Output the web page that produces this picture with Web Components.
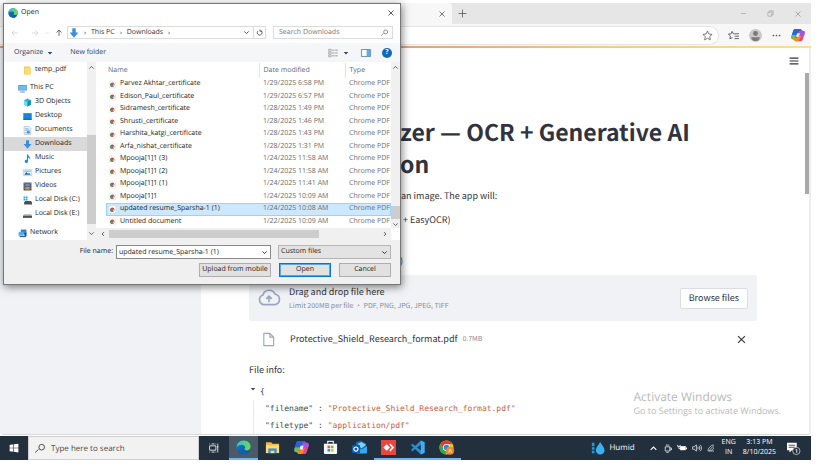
<!DOCTYPE html>
<html lang="en">
<head>
<meta charset="utf-8">
<title>Open</title>
<style>
body{margin:0;background:#fff;font-family:"Open Sans","Noto Sans",sans-serif;font-size:7px;line-height:10px;color:#1b1b1b;text-rendering:geometricPrecision}
</style>
</head>
<body>
<desktop-screen></desktop-screen>
<script>
const define=(name,css,html,setup)=>{
  const t=document.createElement('template');
  t.innerHTML=`<style>*{box-sizing:border-box}button,input,select{font:inherit;color:inherit;text-rendering:inherit;margin:0;padding:0;border:0;background:none;border-radius:0;outline:0}button{display:inline-flex;align-items:center;justify-content:center}${css}</style>${html}`;
  customElements.define(name,class extends HTMLElement{
    connectedCallback(){
      if(this.shadowRoot)return;
      const content=t.content.cloneNode(true);
      if(setup)setup(this,content);
      this.attachShadow({mode:'open'}).append(content);
    }
  });
};

const line=(d,w=1.5,extra='')=>`<path d="${d}" fill="none" stroke="currentColor" stroke-width="${w}" ${extra}/>`;
const edge=`<defs><linearGradient id="e1" x1="0" x2="1" y2=".3"><stop stop-color="#2fc2df"/><stop offset="1" stop-color="#67d957"/></linearGradient><linearGradient id="e2" x1="0" y1="0" x2=".6" y2="1"><stop stop-color="#1a86d8"/><stop offset="1" stop-color="#0c4f9e"/></linearGradient></defs><circle cx="8" cy="8" r="7.6" fill="url(#e2)"/><path d="M.5 8C.8 3.600 4 .4 8.200.4c4.300 0 7.400 3 7.400 6.600 0 2.700-2 4.200-4.200 4.200-1.400 0-2.400-.6-2.400-1.300 0-.6.7-.8.7-2C9.700 6.200 8.100 5 6 5 3 5 1 6.500.5 8Z" fill="url(#e1)"/><path d="M6.400 7.400c-1.300 2.500.2 5.800 4.200 6 1.400.1 2.900-.4 3.600-.8-1.300 1.900-3.300 3-5.900 3C4.500 15.300 3.600 9 6.400 7.400Z" fill="#1464b4"/>`;
const copilot=`<path d="M5 1h5.500c1 0 1.500.6 1.800 1.500l.7 2.200H9.500L7 11.500c-.4 1-1 1.500-2 1.500H2.500C.5 13-.1 11.500.4 9.800L2.500 3C3 1.600 3.800 1 5 1Z" fill="#239de0"/><path d="M5 1h5c1.200 0 1.600.7 2 1.700l.6 2-3.300.1L5.500 8 1 8.200 2.500 3C3 1.600 3.800 1 5 1Z" fill="#2b62d9"/><path d="M.8 8h5L5 10.500c-.4 1.700-1 2.500-2 2.500-2.300 0-3-1.500-2.500-3.200Z" fill="#6fc23c"/><path d="M11 15H5.500c-1 0-1.500-.6-1.800-1.500L3 11.300h3.500L9 4.500C9.400 3.500 10 3 11 3h2.500c2 0 2.600 1.500 2.100 3.200L13.500 13c-.5 1.400-1.300 2-2.500 2Z" fill="#e5468f"/><path d="M9 4.500C9.400 3.500 10 3 11 3h2.500c2 0 2.600 1.500 2.100 3.200L15 8H7.800Z" fill="#a455dd"/><path d="M3 11.300h3.500l1-2.300h4l-2 4.500c-.3.900-.9 1.500-1.800 1.500H5.500c-1 0-1.500-.6-1.800-1.500Z" fill="#f8892b"/><path d="m7 6-1.200 4h3.200L10.300 6Z" fill="#fff" opacity=".85"/>`;
const chrome=`<circle cx="8" cy="8" r="7.500" fill="#fbc116"/><path d="M1.500 4.300A7.500 7.500 0 0 1 14.500 4.300H8L5 9.800Z" fill="#e33b2e"/><path d="M1.500 4.300 4.800 10 8 11.600l-1 3.900A7.500 7.500 0 0 1 1.500 4.300Z" fill="#2da94f"/><circle cx="8" cy="8" r="3.700" fill="#fff"/><circle cx="8" cy="8" r="2.900" fill="#3f7ee8"/>`;
const icons={
  edge,copilot,chrome,
  left:line('M14 8H2M7 3 2 8l5 5',1.200),
  right:line('M2 8h12M9 3l5 5-5 5',1.200),
  up:line('M8 14V2M3 7l5-5 5 5',1.700),
  chevdown:line('m3 5.500 5 5 5-5',2),
  chevup:line('m3 10.500 5-5 5 5',2),
  chevleft:line('M10.500 3 5.500 8l5 5',2.500),
  chevright:line('m5.500 3 5 5-5 5',2.500),
  caret:`<path d="M2 5h12l-6 7Z" fill="currentColor"/>`,
  refresh:line('M4.500 4.500A5.500 5.500 0 1 0 11 3.500M9 1v4h5',1.600),
  lens:line('M6.500 10 1 15M7 6.500a4.500 4.500 0 1 0 9 0 4.500 4.500 0 1 0-9 0',1.500,'transform="translate(-.8 .2)"'),
  close:line('m3 3 10 10M13 3 3 13',1.600),
  plus:line('M8 1v14M1 8h14',1.400),
  min:line('M2 8h12',1.300),
  restore:line('M2 5h9v9H2ZM5 5V2h9v9h-3',1.400),
  star:line('m8 1.500 2 4.300 4.700.6-3.500 3.200.9 4.700L8 12l-4.100 2.300.9-4.700L1.300 6.400 6 5.800Z',1.100,'stroke-linejoin="round"'),
  favs:line('M9.500 5.500H7.700L6 2 4.500 5.500l-4 .5 3 2.700-.8 4.200L6.500 11M9.500 5.500H16M9.500 9H16M9.500 12.500H16',1.300,'stroke-linejoin="round"'),
  avatar:`<circle cx="8" cy="8" r="8" fill="#c9c9c9"/><circle cx="8" cy="5.600" r="3" fill="#7b7b7b"/><path d="M2.800 10h10.400c0 3-2 4.800-5.200 4.800S2.800 13 2.800 10Z" fill="#7b7b7b"/>`,
  dots:`<g fill="currentColor"><circle cx="2.500" cy="8" r="1.500"/><circle cx="8" cy="8" r="1.500"/><circle cx="13.500" cy="8" r="1.500"/></g>`,
  menu:line('M1 3.500h14M1 8h14M1 12.500h14',1.900),
  down:`<path d="M5.300.5h5.400V7H15L8 15.500 1 7h4.300Z" fill="#3b8de0"/>`,
  folder:`<path d="M2 1h10l1 2v12H2Z" fill="#f4c64e"/><path d="M3.500 3H14v12H3.500Z" fill="#fbdc7b"/>`,
  pc:`<path d="M.5 2h15v9.500H.5Z" fill="#3b86c9"/><path d="M1.500 3h13v7.500h-13Z" fill="#69bdf3"/><path d="M4 13.500h8V15H4Z" fill="#4d7796"/>`,
  cube:`<path d="m2 4 6-3 6 3v8l-6 3-6-3Z" fill="#22b2d6"/><path d="m2 4 6 3v8l-6-3Z" fill="#6de0ef"/><path d="m8 7 6-3v8l-6 3Z" fill="#168fb6"/>`,
  desktop:`<path d="M.5 2h15v11.500H.5Z" fill="#1583df"/><path d="M.5 12h15v2H.5Z" fill="#0a61b5"/>`,
  doc:`<path d="M2 1h9l3 3v11H2Z" fill="#eaf3fa" stroke="#8fb2cc"/><path d="M4 5h6M4 7.500h8M4 12h8" stroke="#5295cf" stroke-width="1.200"/><path d="M7 9h5v4H7Z" fill="#4e91cc"/>`,
  music:`<path d="M7 1v9.300A3 3 0 1 0 9 13V6c3 1 3.500 3 2.500 5C15.500 6.500 9.500 5 9 1Z" fill="#1c8ce3"/>`,
  pictures:`<path d="M.5 3h15v10.500H.5Z" fill="#e9f5fd" stroke="#a3bdce"/><path d="m2 12 4-5 3 3 2-1 3 3Z" fill="#28679e"/><path d="M2 4.500h12V7H2Z" fill="#8ccaf3"/>`,
  videos:`<path d="M1 1h14v14H1Z" fill="#46484f"/><path d="M4 2.500h8v5H4Z" fill="#6b90c9"/><path d="M4 8.500h8v5H4Z" fill="#b89a67"/><path d="M2.300 2v12M13.700 2v12" stroke="#c7c7c7" stroke-width="1.100" stroke-dasharray="1.500 1.500"/>`,
  diskc:`<path d="M1 1h3v3H1Zm4 0h3v3H5ZM1 5h3v3H1Zm4 0h3v3H5Z" fill="#21a4e5"/><path d="M2 11 4 9h10l2 2v4H2Z" fill="#4b4f54"/>`,
  disk:`<path d="m0 10 2-3h12l2 3Z" fill="#bfc3c6"/><path d="M0 10h16v4H0Z" fill="#4b4f54"/>`,
  network:`<path d="M5 1h10v8H5Z" fill="#2f83c9"/><path d="M1 5h9v7H1Z" fill="#57aeea"/><path d="M3 13.500h9" stroke="#29618f" stroke-width="2"/><path d="m11 8 4-2v7l-3 2Z" fill="#174f80"/>`,
  pdf:`<path d="M1 0h11l3 3v13H1Z" fill="#fff" stroke="#dedede"/><circle cx="7.500" cy="8.500" r="5" fill="#d94a3a"/><path d="M3 6.500a5 5 0 0 0 3.500 7l2-4Z" fill="#3fa554"/><path d="M9 13.300a5 5 0 0 0 3.300-6H8Z" fill="#f6cf45"/><circle cx="7.800" cy="8.500" r="2" fill="#5076b8"/>`,
  views:`<path d="M1 2h4v3H1Zm0 4.500h4v3H1ZM1 11h4v3H1Z" fill="none" stroke="#8d8d8d"/><path d="M6.500 3.500h4M6.500 8h4M6.500 12.500h4M11.500 3.500h4M11.500 8h4M11.500 12.500h4" stroke="#8d8d8d" stroke-width="1.400"/>`,
  pane:`<path d="M.7 2.500h14.600v11H.7Z" fill="#fff" stroke="#5f7f96" stroke-width="1.400"/><path d="M9 3h6v10H9Z" fill="#58aeea"/>`,
  cloud:line('M4.200 12.800A3.600 3.600 0 0 1 3.600 5.800 4.700 4.700 0 0 1 12.500 5.300 3.800 3.800 0 0 1 12.300 12.800ZM8 11V6.800M6 8.600l2-2 2 2',1.200,'stroke-linejoin="round"'),
  page:line('M3 1.500h6.500L13.500 5.500v9H3ZM9.500 1.500v4h4',1.200,'stroke-linejoin="round"'),
  win:`<path d="m1 3 6-.9v5.400H1Zm7-1 7-1v6.500H8ZM1 8.500h6v5.400L1 13Zm7 0h7V15l-7-1Z" fill="#fff"/>`,
  taskview:line('M1 4.500h10v7H1ZM1 2V1M4 1.500h5M11 2V1M1 14v1M4 14.500h5M11 14v1M14 1v3M14 8v7',1.300)+'<path d="M13 4.500h2v3h-2Z" fill="currentColor"/>',
  explorer:`<path d="M1 2.500h5.500L8 4h7v9.500H1Z" fill="#f0b83c"/><path d="M1 5.500h14v8.500H1Z" fill="#fcdc74"/><path d="M3.500 9h9v5h-9Z" fill="#3f8ed6"/><path d="M6 11.500h4V14H6Z" fill="#fcdc74"/>`,
  store:`<path d="M5 4V1.500h6V4" fill="none" stroke="#d6e6ef" stroke-width="1.300"/><path d="M1 4h14v9.500c0 1-.6 1.500-1.500 1.500h-11C1.600 15 1 14.500 1 13.500Z" fill="#f5f9fc"/><path d="M4.800 6h2.800v2.800H4.800Z" fill="#ee5532"/><path d="M8.400 6h2.800v2.800H8.400Z" fill="#7fba2b"/><path d="M4.800 9.600h2.800v2.800H4.800Z" fill="#219fe5"/><path d="M8.400 9.600h2.800v2.800H8.400Z" fill="#fbb916"/>`,
  outlook:`<path d="M4 2.500 9.500.5 15 4v9.500H4Z" fill="#1467b8"/><path d="m6 4 4-2 5 3-5 4Z" fill="#7bd3f5"/><path d="m5 7 5 3.500L16 6.500V13c0 1-.6 1.500-1.500 1.500H5Z" fill="#35a8ee"/><path d="M0 5.500h8.500V14H0Z" fill="#0c5bb0"/><circle cx="4.200" cy="9.700" r="2.200" fill="none" stroke="#fff" stroke-width="1.200"/>`,
  anydesk:`<path d="M0 0h16v16H0Z" fill="#ef443b"/><path d="m6 4.500 3.500 3.500L6 11.500 2.500 8Z" fill="#fff"/><path d="m8.800 4.800 1.200-1L14 8l-4 4.200-1.200-1L11.500 8Z" fill="#fff"/>`,
  vscode:`<path d="m11.500.5 4 2v11l-4 2L1 5.300 2.500 4 12 11.500V4.500L2.500 12 1 10.700Z" fill="#2490dc"/><path d="m11.500.5 4 2v11l-4 2Z" fill="#41adf2"/>`,
  chromea:chrome+`<circle cx="11.800" cy="11.500" r="4.300" fill="#ee8a2e"/><path d="m10.300 13.500 1.500-4 1.500 4" fill="none" stroke="#ffe0a8"/>`,
  humid:`<path d="M1 2h3v4H1Zm0 5h3v3H1Zm0 4h3v3H1Z" fill="#1c9be6"/><path d="M10.500 1C13 5 15.500 7.500 15.500 10.500a5 5 0 0 1-10 0C5.500 7.500 8 5 10.500 1Z" fill="#39b2f2"/>`,
  meet:line('M4 5h8v7.500H4ZM5 2h6M6 15h4M12 7h3v3.500h-3',1.300),
  battery:`<path d="M5 5h9v6.500H5Z" fill="currentColor"/><path d="M14.500 7h1.500v3h-1.500Z" fill="currentColor"/>`+line('M1 3v2.500h4V3M3 5.500V9h2',1.300),
  sound:line('M1 6h2.500L7 3v10L3.500 10H1ZM9 6c1 1 1 3 0 4M11 4.500c2 2 2 5 0 7M13 3c3 3 3 7 0 10',1.100),
  wifi:line('M2 14C2 8 8 2 14 2M5.500 14C5.500 10 10 5.500 14 5.500M9 14c0-2 3-5 5-5M2 14h12',1.300),
  notif:`<path d="M0 1h12v9H6l-3 3v-3H0Z" fill="#fff"/><path d="M2 4h8M2 6.500h8" stroke="#22303d"/><circle cx="11.500" cy="11" r="4.500" fill="#22303d" stroke="#c5cbd0"/><path d="M10.500 9.500 12 9v4.500" fill="none" stroke="#fff"/>`
};
define('ui-icon',':host{display:inline-flex;flex:none;width:var(--s,10px);height:var(--s,10px)}svg{width:100%;height:100%;overflow:visible}','<svg viewBox="0 0 16 16" aria-hidden="true"></svg>',
  (h,r)=>{r.querySelector('svg').innerHTML=icons[h.getAttribute('name')]||''});

/* Browser */
define('browser-tabs',`
:host{display:flex;height:21px;background:#e6e6e6;color:#555}
.tab{width:452px;background:#f7f7f7;display:flex;align-items:center;justify-content:flex-end;padding-right:6px;border-radius:0 4px 0 0}
.new{width:20px}.grow{flex:1}.win{width:27px;color:#999}
`,`<div class="tab"><button aria-label="Close tab"><ui-icon name="close" style="--s:8px"></ui-icon></button></div>
<button class="new" aria-label="New tab"><ui-icon name="plus" style="--s:9px"></ui-icon></button><span class="grow"></span>
<button class="win" aria-label="Minimize"><ui-icon name="min" style="--s:7px"></ui-icon></button>
<button class="win" aria-label="Restore"><ui-icon name="restore" style="--s:7px"></ui-icon></button>
<button class="win" aria-label="Close window"><ui-icon name="close" style="--s:8px"></ui-icon></button>`);
define('browser-toolbar',`
:host{display:flex;align-items:center;height:22px;background:#f7f7f7;color:#505560;padding-right:6px}
.address{flex:1;height:19px;background:#fff;border:1px solid #e4e4e4;border-left:0;border-radius:0 10px 10px 0;display:flex;align-items:center;justify-content:flex-end;padding-right:5px}
nav{display:flex;align-items:center;gap:10px;padding-left:9px}
`,`<div class="address"><button aria-label="Add to favorites"><ui-icon name="star" style="--s:11px"></ui-icon></button></div>
<nav><button aria-label="Favorites"><ui-icon name="favs" style="--s:11px"></ui-icon></button><button aria-label="Profile"><ui-icon name="avatar" style="--s:13px"></ui-icon></button><button aria-label="More"><ui-icon name="dots" style="--s:9px"></ui-icon></button><button aria-label="Copilot"><ui-icon name="copilot" style="--s:14px"></ui-icon></button></nav>`);
define('file-uploader',`
:host{display:block}
.drop{display:flex;align-items:center;height:46px;background:#f0f2f6;border-radius:2px;padding:0 9px 0 9px;gap:9px}
.drop ui-icon{--s:22px;color:#9aa6bd}
.txt{flex:1;display:flex;flex-direction:column}
small{font-size:7px;line-height:13px;color:#8b8d98}
.browse{height:21px;padding:0 8px;background:#fff;border:1px solid #dcdde2;border-radius:2px}
.file{display:flex;align-items:center;height:16px;margin-top:10px;padding:0 10px 0 12px;gap:14px}
.file ui-icon{--s:15px;color:#9aa6bd}
.name{flex:1;display:flex;gap:5px}.name small{line-height:17px}
`,`<div class="drop"><ui-icon name="cloud"></ui-icon><div class="txt"><span>Drag and drop file here</span><small>Limit 200MB per file • PDF, PNG, JPG, JPEG, TIFF</small></div><button class="browse">Browse files</button></div>
<div class="file"><ui-icon name="page"></ui-icon><div class="name"><span>Protective_Shield_Research_format.pdf</span><small>0.7MB</small></div><button aria-label="Remove file"><ui-icon name="close" style="--s:11px;color:#31333f"></ui-icon></button></div>`);
define('json-view',`
:host{display:block;font:8px/17px "DejaVu Sans Mono",monospace;color:#3c4a58}
.open{display:flex;gap:4px;padding-left:1px}
.open ui-icon{--s:6px;margin-top:3px}
dl{margin:0 0 0 4px;padding-left:11px;border-left:1px solid #e8eaef}
dl div{display:flex;gap:5px}dt,dd{margin:0}dd{color:#c8603c}
`,`<div class="open"><ui-icon name="caret"></ui-icon><span>{</span></div>
<dl><div><dt>"filename" :</dt><dd>"Protective_Shield_Research_format.pdf"</dd></div><div><dt>"filetype" :</dt><dd>"application/pdf"</dd></div></dl>`);
define('app-page',`
:host{display:flex;min-height:0;overflow:hidden;position:relative;color:#31333f;font:9px/16px "Noto Sans CJK SC",sans-serif;border-top:2px solid #f3ba68;border-image:linear-gradient(90deg,#e09a70 45%,#f4c987 75%,#fae08c) 1}
aside{width:201px;flex:none;background:#f0f2f6}
main{flex:1;min-width:0;padding:67px 48px 0}
.col{max-width:508px;margin:0 auto}
h1{margin:0;font-size:23px;line-height:32px;font-weight:700;padding-left:151px;white-space:nowrap}
p{margin:9px 0 0}.off{padding-left:152px}
ul{list-style:none;margin:8px 0 6px;padding-left:147px;display:grid;gap:25px}
.info{margin:15px 0 5px}
.menu{position:absolute;right:12px;top:8px}
.bar{width:6px;flex:none;padding-top:25px;border-right:2px solid #ededed}
.bar i{display:block;height:121px;background:#a9a9a9}
.mark{position:absolute;right:30px;bottom:17px;font:9px/13px "Open Sans",sans-serif;color:#b9b9b9}
.mark b{display:block;font-weight:400;font-size:12px;line-height:14px}
`,`<aside></aside><main><div class="col"><h1>zer — OCR + Generative AI<br>on</h1><p class="off">an image. The app will:</p>
<ul><li>F + EasyOCR)</li><li>&nbsp;&nbsp;)</li></ul><file-uploader></file-uploader><p class="info">File info:</p><json-view></json-view></div></main>
<div class="bar"><i></i></div><button class="menu" aria-label="Menu"><ui-icon name="menu" style="--s:10px"></ui-icon></button>
<div class="mark"><b>Activate Windows</b>Go to Settings to activate Windows.</div>`);
define('browser-window',`
:host{display:flex;flex-direction:column;min-height:0;border-bottom:1px solid #d9d9d9;border-radius:0 0 4px 4px}
app-page{flex:1}
`,`<browser-tabs></browser-tabs><browser-toolbar></browser-toolbar><app-page></app-page>`);

/* Open-file dialog */
define('nav-item',`
:host{display:flex;align-items:center;gap:3px;flex:1;padding-left:19px;white-space:nowrap;line-height:12px}
:host([root]){padding-left:14px}
:host([selected]){background:#d9d9d9}
ui-icon{--s:9px}
`,`<ui-icon></ui-icon><slot></slot>`,(h,r)=>r.querySelector('ui-icon').setAttribute('name',h.getAttribute('icon')));
define('folder-tree',`
:host{display:flex;background:#fff}
.items{flex:1;display:flex;flex-direction:column;overflow:hidden;padding-top:1px}
nav-item.head{flex:none;height:14px;margin-bottom:4px}
nav-item.foot{flex:none;height:14px;margin-top:5px}
.bar{width:9px;background:#f0f0f0;display:flex;flex-direction:column;align-items:center;color:#505050;padding:2px 0 3px}
.bar i{width:100%;height:89px;background:#cdcdcd;margin-top:auto;margin-bottom:6px}
`,`<div class="items"><nav-item class="head" icon="folder">temp_pdf</nav-item><nav-item root icon="pc">This PC</nav-item><nav-item icon="cube">3D Objects</nav-item><nav-item icon="desktop">Desktop</nav-item><nav-item icon="doc">Documents</nav-item><nav-item selected icon="down">Downloads</nav-item><nav-item icon="music">Music</nav-item><nav-item icon="pictures">Pictures</nav-item><nav-item icon="videos">Videos</nav-item><nav-item icon="diskc">Local Disk (C:)</nav-item><nav-item icon="disk">Local Disk (E:)</nav-item><nav-item root class="foot" icon="network">Network</nav-item></div>
<div class="bar"><ui-icon name="chevup" style="--s:7px"></ui-icon><i></i><ui-icon name="chevdown" style="--s:7px"></ui-icon></div>`);
const files=[['Parvez Akhtar_certificate','1/29/2025 6:58 PM'],['Edison_Paul_certificate','1/29/2025 6:57 PM'],['Sidramesh_certificate','1/28/2025 1:49 PM'],['Shrusti_certificate','1/28/2025 1:46 PM'],['Harshita_katgi_certificate','1/28/2025 1:43 PM'],['Arfa_nishat_certificate','1/28/2025 1:31 PM'],['Mpooja[1]1 (3)','1/24/2025 11:58 AM'],['Mpooja[1]1 (2)','1/24/2025 11:58 AM'],['Mpooja[1]1 (1)','1/24/2025 11:41 AM'],['Mpooja[1]1','1/24/2025 10:09 AM'],['updated resume_Sparsha-1 (1)','1/24/2025 10:08 AM'],['Untitled document','1/22/2025 10:09 AM']];
define('file-list',`
:host{display:grid;grid-template-columns:1fr 9px;grid-template-rows:1fr 12px;background:#fff;min-width:0}
.view{overflow:hidden;padding:1px 0 0 10px;min-width:0}
table{width:100%;height:165px;border-collapse:collapse;table-layout:fixed;white-space:nowrap}
th,td{padding:0;text-align:left;font-weight:400}
th{height:15px;color:#55688a;border-right:1px solid #e5e5e5;padding-left:4px}
th:first-child{width:153px;padding-left:2px}th:nth-child(2){width:86px}th:last-child{border:0}
td{color:#6d6d6d;padding-left:4px}td:first-child{color:#1b1b1b;padding-left:3px}
td span{display:flex;align-items:center;gap:4px}
td ui-icon{--s:7px}
.sel{background:#cce8ff;outline:1px solid #99d1ff;outline-offset:-1px}
.v{background:#f0f0f0;display:flex;flex-direction:column;align-items:center;color:#505050;padding-top:2px}
.v i{width:100%;height:13px;background:#cdcdcd;margin-top:auto;margin-bottom:2px}
.h{background:#f0f0f0;display:flex;align-items:center;padding:0 3px 0 4px;color:#505050;gap:3px}
.h i{width:73%;height:8px;background:#cdcdcd;margin-right:auto}
`,`<div class="view"><table><thead><tr><th>Name</th><th>Date modified</th><th>Type</th></tr></thead><tbody></tbody></table></div>
<div class="v"><ui-icon name="chevup" style="--s:7px"></ui-icon><i></i><ui-icon name="chevdown" style="--s:7px"></ui-icon></div>
<div class="h"><ui-icon name="chevleft" style="--s:6px"></ui-icon><i></i><ui-icon name="chevright" style="--s:6px"></ui-icon></div>`,
(h,r)=>{r.querySelector('tbody').innerHTML=files.map(([n,d],i)=>`<tr${i===10?' class="sel"':''}><td><span><ui-icon name="pdf"></ui-icon>${n}</span></td><td>${d}</td><td>Chrome PDF</td></tr>`).join('')});
define('file-dialog',`
:host{display:flex;flex-direction:column;background:#fff;border:1px solid #777;box-shadow:1px 2px 8px rgba(0,0,0,.5)}
header{display:flex;align-items:center;gap:3px;height:18px;padding:0 5px 0 4px;line-height:12px}
header span{flex:1}
.path{display:flex;align-items:center;height:21px;padding:0 7px 0 7px;color:#555}
.arrows{display:flex;align-items:center;gap:6px;width:56px}
.arrows .dim{color:#c4c4c4}
.crumbs{flex:1;height:13px;border:1px solid #dcdcdc;display:flex;align-items:center;gap:4px;padding-left:1px;color:#333}
.crumbs button.c{margin-left:auto;width:13px}.crumbs button.r{width:12px;height:11px;border-left:1px solid #dcdcdc;margin-left:-4px}
.search{width:120px;height:13px;margin-left:7px;border:1px solid #dcdcdc;display:flex;align-items:center;padding:0 4px 0 5px}
.search input{flex:1;min-width:0;height:11px}input::placeholder{color:#777;opacity:1}
.tools{display:flex;align-items:center;height:19px;background:#f5f6f7;padding:0 8px 0 10px;color:#2c405f;gap:17px}
.tools .g{margin-left:auto;gap:5px}.tools button{gap:4px}
.tools .p{margin:0 -6px 0 -5px}
.help{width:10px;height:10px;border-radius:50%;background:#0f69b9;color:#fff;font-weight:700}
.body{flex:1;display:flex;min-height:0}
folder-tree{width:92px;flex:none}file-list{flex:1}
footer{background:#f0f0f0;padding:5px 9px 7px 7px;display:grid;grid-template-columns:105px 155px 1fr;gap:4px 0}
footer label{text-align:right;padding-right:3px;line-height:13px}
.combo{display:flex;align-items:center;border:1px solid #8a8a8a;background:#fff;height:14px;padding:0 2px}
.combo input{flex:1;min-width:0;height:12px}
.sel{margin-left:7px;position:relative;display:flex}
select{appearance:none;width:100%;height:14px;background:#e3e3e3;border:1px solid #b5b5b5;padding:0 2px}
.sel ui-icon{position:absolute;right:3px;top:4px}
.btns{grid-column:1/-1;display:flex;justify-content:flex-end;gap:8px}
.btns button{width:52px;height:14px;background:#e1e1e1;border:1px solid #adadad}
.btns .up{width:72px;white-space:nowrap}.btns .ok{border:1px solid #0078d7;outline:1px solid #5fa6dd;outline-offset:-2px}
`,`<header><ui-icon name="edge" style="--s:10px"></ui-icon><span>Open</span><button aria-label="Close dialog"><ui-icon name="close" style="--s:8px;color:#333"></ui-icon></button></header>
<div class="path"><div class="arrows"><ui-icon class="dim" name="left" style="--s:8px"></ui-icon><ui-icon class="dim" name="right" style="--s:8px;margin-left:6px"></ui-icon><ui-icon class="dim" name="chevdown" style="--s:4px"></ui-icon><ui-icon name="up" style="--s:8px"></ui-icon></div>
<div class="crumbs"><ui-icon name="down" style="--s:10px"></ui-icon><ui-icon name="chevright" style="--s:4px"></ui-icon><span>This PC</span><ui-icon name="chevright" style="--s:4px"></ui-icon><span>Downloads</span><ui-icon name="chevright" style="--s:4px"></ui-icon><button class="c" aria-label="Previous locations"><ui-icon name="chevdown" style="--s:7px"></ui-icon></button><button class="r" aria-label="Refresh"><ui-icon name="refresh" style="--s:7px"></ui-icon></button></div>
<div class="search"><input type="text" placeholder="Search Downloads" aria-label="Search Downloads"><ui-icon name="lens" style="--s:7px"></ui-icon></div></div>
<div class="tools"><button>Organize <ui-icon name="caret" style="--s:6px"></ui-icon></button><button>New folder</button><button class="g" aria-label="Change view"><ui-icon name="views" style="--s:10px"></ui-icon><ui-icon name="caret" style="--s:6px"></ui-icon></button><button class="p" aria-label="Preview pane"><ui-icon name="pane" style="--s:10px"></ui-icon></button><button class="help">?</button></div>
<div class="body"><folder-tree></folder-tree><file-list></file-list></div>
<footer><label for="fn">File name:</label><div class="combo"><input id="fn" type="text" value="updated resume_Sparsha-1 (1)"><ui-icon name="chevdown" style="--s:7px"></ui-icon></div>
<div class="sel"><select aria-label="File type"><option>Custom files</option></select><ui-icon name="chevdown" style="--s:7px"></ui-icon></div>
<div class="btns"><button class="up">Upload from mobile</button><button class="ok">Open</button><button>Cancel</button></div></footer>`);

/* Taskbar */
define('task-app',`
:host{display:flex;width:29px;height:24px}
button{width:100%;border-bottom:2px solid transparent}
:host([running]) button{border-bottom-color:#78b4ea}
:host([active]) button{background:#4a5a67}
ui-icon{--s:15px}
`,`<button><ui-icon></ui-icon></button>`,(h,r)=>{const n=h.getAttribute('icon');r.querySelector('ui-icon').setAttribute('name',n);r.querySelector('button').setAttribute('aria-label',n)});
define('task-bar',`
:host{display:flex;align-items:center;height:24px;background:#22303d;color:#fff}
.start{width:28px;height:24px}
.search{display:flex;align-items:center;gap:6px;width:171px;height:24px;background:#f2f2f2;border:1px solid #cfcfcf;padding:0 6px;color:#444}
.search input{flex:1;min-width:0;font-size:8px;height:20px}.search input::placeholder{color:#4b4b4b;opacity:1}
.view{width:30px;height:24px}
.tray{margin-left:auto;display:flex;align-items:center;gap:5px;padding-right:11px}
.tray>span{text-align:center}
.humid{display:flex;align-items:center;gap:4px;font-size:8px;margin-right:9px}
.lang{margin-left:2px}.clock{margin:0 6px 0 2px}
`,`<button class="start" aria-label="Start"><ui-icon name="win" style="--s:10px"></ui-icon></button>
<div class="search"><ui-icon name="lens" style="--s:10px"></ui-icon><input type="text" placeholder="Type here to search" aria-label="Type here to search"></div>
<button class="view" aria-label="Task view"><ui-icon name="taskview" style="--s:10px"></ui-icon></button>
<task-app icon="edge" running active></task-app><task-app icon="explorer"></task-app><task-app icon="copilot"></task-app><task-app icon="store"></task-app><task-app icon="outlook"></task-app><task-app icon="anydesk" running></task-app><task-app icon="vscode" running></task-app><task-app icon="chromea" running></task-app>
<div class="tray"><span class="humid"><ui-icon name="humid" style="--s:14px"></ui-icon>Humid</span><ui-icon name="chevup" style="--s:9px"></ui-icon><ui-icon name="meet" style="--s:9px"></ui-icon><ui-icon name="battery" style="--s:10px"></ui-icon><ui-icon name="sound" style="--s:10px"></ui-icon><ui-icon name="wifi" style="--s:8px"></ui-icon><span class="lang">ENG<br>IN</span><span class="clock">3:13 PM<br>8/10/2025</span><ui-icon name="notif" style="--s:13px"></ui-icon></div>`);
define('desktop-screen',`
:host{display:flex;flex-direction:column;height:100vh;padding:3px 7px 6px 0;position:relative}
:host{box-sizing:border-box}
browser-window{flex:1}task-bar{flex:none;margin-top:1px}
file-dialog{position:absolute;left:3px;top:3px;width:398px;height:282px;box-sizing:border-box}
`,`<browser-window></browser-window><task-bar></task-bar><file-dialog></file-dialog>`);
</script>
</body>
</html>
